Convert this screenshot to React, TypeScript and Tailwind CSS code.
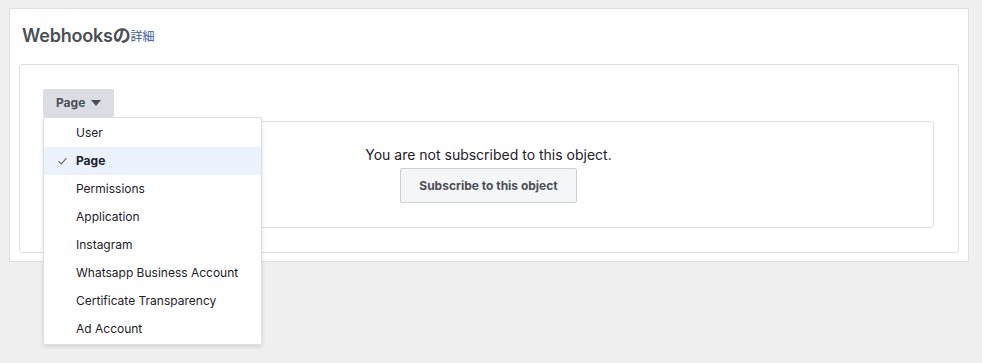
import { useState } from "react";

const OBJECTS = [
  "User",
  "Page",
  "Permissions",
  "Application",
  "Instagram",
  "Whatsapp Business Account",
  "Certificate Transparency",
  "Ad Account",
];

export default function App() {
  const [selected, setSelected] = useState("Page");

  return (
    <div
      className="min-h-[363px] bg-[#f0f0f0] pt-2 pl-[9px] pr-[13px] text-[#1c1e21]"
      style={{ fontFamily: "Inter, 'Liberation Sans', 'Noto Sans CJK JP', sans-serif" }}
    >
      <div className="bg-white border border-[#dddfe2] pl-[9px] pr-[9px] pb-2">
        {/* Title */}
        <div className="h-[55px] flex items-center pl-[3px] pb-[2px]">
          <span className="text-[18px] font-semibold text-[#4b4f56] tracking-[-0.2px]">Webhooksの</span>
          <a className="text-[12px] text-[#365899] mt-[3px]">詳細</a>
        </div>

        {/* Inner card */}
        <div className="border border-[#dddfe2] rounded-[3px] pl-[23px] pr-6 py-6">
          <div className="relative">
            <button className="h-7 px-[13px] bg-[#dadde1] rounded-[2px] flex items-center gap-[6px] text-[12px] font-bold text-[#4b4f56]">
              Page
              <svg viewBox="0 0 10 6" className="w-[10px] h-[6px]">
                <path d="M0 0h10L5 6z" fill="#4b4f56" />
              </svg>
            </button>

            {/* Dropdown menu */}
            <div className="absolute left-0 top-7 z-10 w-[219px] bg-white border border-[#dddfe2] rounded-[2px] shadow-[0_2px_4px_rgba(0,0,0,0.12)] py-px">
              {OBJECTS.map((o) => (
                <div
                  key={o}
                  onClick={() => setSelected(o)}
                  className={`h-7 flex items-center pl-[32px] text-[12px] relative ${
                    o === selected ? "bg-[#ebf2fe] font-bold text-[#1d2129]" : "text-[#1d2129]"
                  }`}
                >
                  {o === selected && (
                    <svg viewBox="0 0 10 8" className="absolute left-[14px] w-[9px] h-[8px]">
                      <path d="M0.5 4.2 3.6 7.2 9.5 0.8" fill="none" stroke="#606770" strokeWidth="1.2" />
                    </svg>
                  )}
                  {o}
                </div>
              ))}
            </div>

            {/* Subscription box */}
            <div className="mt-1 h-[107px] border border-[#dddfe2] rounded-[3px] flex flex-col items-center pt-[24px]">
              <div className="text-[14px] text-[#1d2129] leading-[18px]">You are not subscribed to this object.</div>
              <button className="mt-1 h-[35px] px-[18px] bg-[#f5f6f7] border border-[#ccd0d5] rounded-[2px] text-[12px] font-bold text-[#4b4f56]">
                Subscribe to this object
              </button>
            </div>
          </div>
        </div>
      </div>
    </div>
  );
}
